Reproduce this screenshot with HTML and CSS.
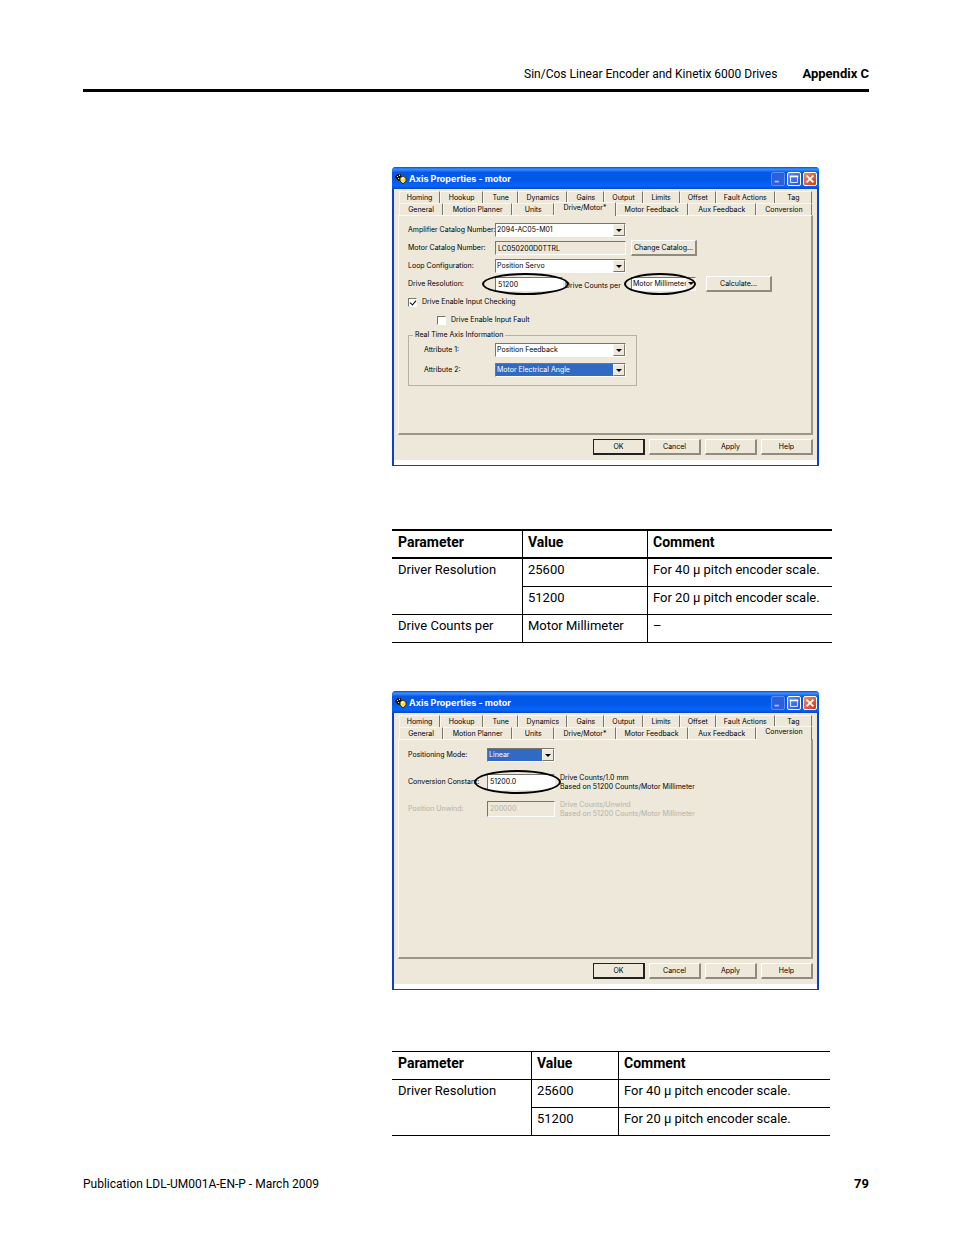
FILE: index.html
```html
<!DOCTYPE html>
<html lang="en">
  <head>
    <meta charset="UTF-8" />
    <meta name="viewport" content="width=device-width, initial-scale=1.0" />
    <title>Sin/Cos Linear Encoder and Kinetix 6000 Drives</title>
    <link rel="stylesheet" href="styles.css">
  </head>

  <body>
    <!-- title bar icon, shared by both dialogs -->
    <svg class="defs" aria-hidden="true">
      <symbol id="axis-icon" viewBox="0 0 12 12">
        <path d="M1 2h1V1h2v1h1V1h1v2h1v3H6v1H5v1H3V7H2V6H1V5H0V3h1z" fill="#111" />
        <path d="M2 3h1v1H2zM4 2h1v1H4zM3 5h1v1H3z" fill="#f5e9a0" />
        <path d="M5 5l3-2 3 2v3l-3 3-3-3z" fill="#f5e04a" stroke="#3a3410" />
        <path d="M6 5l2-1 1 1-2 2z" fill="#fffbd0" />
      </symbol>
    </svg>

    <div class="page">
      <header class="page-header">
        <span>Sin/Cos Linear Encoder and Kinetix 6000 Drives</span>
        <strong>Appendix C</strong>
      </header>

      <main class="content">
        <!-- Drive/Motor tab -->
        <section class="dialog">
          <div class="titlebar">
            <svg class="title-icon"><use href="#axis-icon" /></svg>
            <h2>Axis Properties - motor</h2>
            <button class="win-btn dim" aria-label="Minimize"><svg viewBox="0 0 14 14"><path d="M3 10h5" /></svg></button>
            <button class="win-btn" aria-label="Maximize"><svg viewBox="0 0 14 14"><path d="M2 4h10" /><path class="thin" d="M3 4v7h8V4" /></svg></button>
            <button class="win-btn close" aria-label="Close"><svg viewBox="0 0 14 14"><path d="M3 3l8 8M11 3l-8 8" /></svg></button>
          </div>
          <div class="dialog-body">
            <div class="tabs tabs-back">
              <button>Homing</button>
              <button>Hookup</button>
              <button>Tune</button>
              <button>Dynamics</button>
              <button>Gains</button>
              <button>Output</button>
              <button>Limits</button>
              <button>Offset</button>
              <button>Fault Actions</button>
              <button>Tag</button>
            </div>
            <div class="tabs tabs-front">
              <button>General</button>
              <button>Motion Planner</button>
              <button>Units</button>
              <button class="active">Drive/Motor*</button>
              <button>Motor Feedback</button>
              <button>Aux Feedback</button>
              <button>Conversion</button>
            </div>
            <div class="panel">
              <div class="row">
                <label for="amplifier">Amplifier Catalog Number:</label>
                <div class="combo wide">
                  <select id="amplifier"><option>2094-AC05-M01</option></select>
                  <span class="arrow"></span>
                </div>
              </div>
              <div class="row">
                <label for="motor">Motor Catalog Number:</label>
                <input id="motor" class="field wide readonly" type="text" value="LC050200D0TTRL" readonly />
                <button class="btn">Change Catalog...</button>
              </div>
              <div class="row">
                <label for="loop">Loop Configuration:</label>
                <div class="combo wide">
                  <select id="loop"><option>Position Servo</option></select>
                  <span class="arrow"></span>
                </div>
              </div>
              <div class="row">
                <label for="resolution">Drive Resolution:</label>
                <div class="slot">
                  <div class="circled">
                    <input id="resolution" class="field" type="text" value="51200" />
                  </div>
                  <label class="unit" for="counts">Drive Counts per</label>
                </div>
                <div class="combo circled">
                  <select id="counts"><option>Motor Millimeter</option></select>
                  <span class="arrow"></span>
                </div>
                <button class="btn calculate">Calculate...</button>
              </div>
              <div class="row check">
                <input id="checking" type="checkbox" checked />
                <label for="checking">Drive Enable Input Checking</label>
              </div>
              <div class="row check nested">
                <input id="fault" type="checkbox" />
                <label for="fault">Drive Enable Input Fault</label>
              </div>
              <fieldset>
                <legend>Real Time Axis Information</legend>
                <div class="row">
                  <label for="attr1">Attribute 1:</label>
                  <div class="combo wide">
                    <select id="attr1"><option>Position Feedback</option></select>
                    <span class="arrow"></span>
                  </div>
                </div>
                <div class="row">
                  <label for="attr2">Attribute 2:</label>
                  <div class="combo wide selected">
                    <select id="attr2"><option>Motor Electrical Angle</option></select>
                    <span class="arrow"></span>
                  </div>
                </div>
              </fieldset>
            </div>
            <div class="actions">
              <button class="btn default">OK</button>
              <button class="btn">Cancel</button>
              <button class="btn">Apply</button>
              <button class="btn">Help</button>
            </div>
          </div>
        </section>

        <table class="params drive-params">
          <thead>
            <tr><th>Parameter</th><th>Value</th><th>Comment</th></tr>
          </thead>
          <tbody>
            <tr><td rowspan="2">Driver Resolution</td><td>25600</td><td>For 40 µ pitch encoder scale.</td></tr>
            <tr><td>51200</td><td>For 20 µ pitch encoder scale.</td></tr>
            <tr><td>Drive Counts per</td><td>Motor Millimeter</td><td>–</td></tr>
          </tbody>
        </table>

        <!-- Conversion tab -->
        <section class="dialog">
          <div class="titlebar">
            <svg class="title-icon"><use href="#axis-icon" /></svg>
            <h2>Axis Properties - motor</h2>
            <button class="win-btn dim" aria-label="Minimize"><svg viewBox="0 0 14 14"><path d="M3 10h5" /></svg></button>
            <button class="win-btn" aria-label="Maximize"><svg viewBox="0 0 14 14"><path d="M2 4h10" /><path class="thin" d="M3 4v7h8V4" /></svg></button>
            <button class="win-btn close" aria-label="Close"><svg viewBox="0 0 14 14"><path d="M3 3l8 8M11 3l-8 8" /></svg></button>
          </div>
          <div class="dialog-body">
            <div class="tabs tabs-back">
              <button>Homing</button>
              <button>Hookup</button>
              <button>Tune</button>
              <button>Dynamics</button>
              <button>Gains</button>
              <button>Output</button>
              <button>Limits</button>
              <button>Offset</button>
              <button>Fault Actions</button>
              <button>Tag</button>
            </div>
            <div class="tabs tabs-front">
              <button>General</button>
              <button>Motion Planner</button>
              <button>Units</button>
              <button>Drive/Motor*</button>
              <button>Motor Feedback</button>
              <button>Aux Feedback</button>
              <button class="active">Conversion</button>
            </div>
            <div class="panel conversion">
              <div class="row">
                <label for="mode">Positioning Mode:</label>
                <div class="combo selected">
                  <select id="mode"><option>Linear</option></select>
                  <span class="arrow"></span>
                </div>
              </div>
              <div class="row">
                <label for="constant">Conversion Constant:</label>
                <div class="circled">
                  <input id="constant" class="field" type="text" value="51200.0" />
                </div>
                <p>Drive Counts/1.0 mm<br />Based on 51200 Counts/Motor Millimeter</p>
              </div>
              <div class="row disabled">
                <label for="unwind">Position Unwind:</label>
                <input id="unwind" class="field" type="text" value="200000" disabled />
                <p>Drive Counts/Unwind<br />Based on 51200 Counts/Motor Millimeter</p>
              </div>
            </div>
            <div class="actions">
              <button class="btn default">OK</button>
              <button class="btn">Cancel</button>
              <button class="btn">Apply</button>
              <button class="btn">Help</button>
            </div>
          </div>
        </section>

        <table class="params conversion-params">
          <thead>
            <tr><th>Parameter</th><th>Value</th><th>Comment</th></tr>
          </thead>
          <tbody>
            <tr><td rowspan="2">Driver Resolution</td><td>25600</td><td>For 40 µ pitch encoder scale.</td></tr>
            <tr><td>51200</td><td>For 20 µ pitch encoder scale.</td></tr>
          </tbody>
        </table>
      </main>

      <footer class="page-footer">
        <span>Publication LDL-UM001A-EN-P - March 2009</span>
        <strong>79</strong>
      </footer>
    </div>
  </body>
</html>
```
FILE: styles.css
```css
* {
  box-sizing: border-box;
  margin: 0;
  padding: 0;
}

body {
  background-color: #ffffff;
  color: #000000;
  font-family: Roboto, sans-serif;
  font-size: 13px;
  line-height: 16px;
}

button,
input,
select {
  font: inherit;
  color: inherit;
  border: none;
  border-radius: 0;
  appearance: none;
}

.defs {
  position: absolute;
  width: 0;
  height: 0;
}

.page {
  padding: 66px 85px 40px 83px;
}

.page-header {
  display: flex;
  justify-content: flex-end;
  gap: 25px;
  padding-bottom: 7px;
  border-bottom: 3px solid #000000;
}

.page-header span,
.page-footer span {
  font-size: 12px;
}

.content {
  margin-left: 309px;
  padding-top: 75px;
}

.page-footer {
  display: flex;
  justify-content: space-between;
  margin-top: 40px;
}

/* ---- dialog window ---- */

.dialog {
  max-width: 427px;
  background-color: #ffffff;
  border: 1px solid #0a3fd0;
  border-width: 0 2px 1px;
  border-radius: 4px 4px 0 0;
  padding-bottom: 5px;
  font-family: Inter, sans-serif;
  font-size: 7px;
  line-height: 10px;
}

.titlebar {
  display: flex;
  align-items: center;
  gap: 2px;
  height: 22px;
  margin: 0 -2px;
  padding: 1px 2px 0 3px;
  border-radius: 4px 4px 0 0;
  background: linear-gradient(#0a50d0, #3a90ff 10%, #0458e8 25%, #0458e8 60%, #0566fb 85%, #0447c8);
  color: #ffffff;
}

.title-icon {
  width: 12px;
  height: 12px;
}

.titlebar h2 {
  flex: 1;
  font-size: 9px;
  line-height: 12px;
}

.win-btn {
  width: 14px;
  height: 14px;
  border: 1px solid #ffffff;
  border-radius: 2px;
  background: linear-gradient(135deg, #5b8df5, #1c55dd);
}

.win-btn.dim {
  border-color: #5d8df0;
  background: #2c5fdc;
}

.win-btn.close {
  background: linear-gradient(135deg, #f08a68, #d03a14);
}

.win-btn svg {
  display: block;
  width: 100%;
  height: 100%;
  fill: none;
  stroke: #ffffff;
  stroke-width: 2;
}

.win-btn svg .thin {
  stroke-width: 1;
}

.win-btn.dim svg {
  stroke: #a9c1f5;
}

.dialog-body {
  background-color: #ede8da;
  padding: 2px 4px 5px;
}

/* ---- tabs ---- */

.tabs {
  display: grid;
  padding: 0 1px;
}

.tabs button {
  height: 12px;
  background-color: #ede8da;
  border-top: 1px solid #f9f7f0;
  border-left: 1px solid #f9f7f0;
  border-right: 1px solid #77756c;
  white-space: nowrap;
}

.tabs-back {
  grid-template-columns: 41fr 43fr 35fr 49fr 37fr 38fr 37fr 36fr 59fr 37fr;
}

.tabs-front {
  grid-template-columns: 44fr 69fr 42fr 61fr 72fr 68fr 56fr;
}

.tabs-front button.active {
  height: 14px;
  margin: -1px 0 -1px;
  padding-bottom: 3px;
  z-index: 1;
}

.panel {
  display: flex;
  flex-direction: column;
  gap: 2px;
  height: 220px;
  padding: 6px 9px;
  border: 1px solid #fbfaf5;
  border-right: 2px solid #9a978a;
  border-bottom: 2px solid #9a978a;
}

.actions {
  display: flex;
  justify-content: flex-end;
  gap: 4px;
  padding-top: 4px;
}

.actions .btn {
  width: 52px;
}

/* ---- form controls ---- */

.row {
  display: flex;
  align-items: center;
  gap: 5px;
  height: 16px;
}

.row > label {
  width: 82px;
  white-space: nowrap;
}

.btn {
  width: 66px;
  height: 16px;
  background-color: #ede8da;
  border: 1px solid #ffffff;
  border-right: 2px solid #8f8c7f;
  border-bottom: 2px solid #8f8c7f;
  white-space: nowrap;
}

.btn.default {
  border: 1px solid #222222;
  border-right-width: 2px;
  border-bottom-width: 2px;
}

.btn.calculate {
  margin-left: 5px;
}

.field,
.combo {
  width: 68px;
  height: 14px;
  background-color: #ffffff;
  border: 1px solid #ffffff;
  border-top: 1px solid #77756c;
  border-left: 1px solid #77756c;
}

.field {
  display: block;
  padding-left: 2px;
}

.field.wide,
.combo.wide {
  width: 131px;
}

.field.readonly,
.field:disabled {
  background-color: #ede8da;
}

.combo {
  position: relative;
}

.combo select {
  display: block;
  width: 100%;
  height: 100%;
  padding: 0 0 0 1px;
  background-color: transparent;
}

.combo.selected select {
  background-color: #316ac5;
  color: #ffffff;
}

.arrow {
  position: absolute;
  top: 0;
  right: 0;
  width: 12px;
  height: 12px;
  background-color: #ede8da;
  border: 1px solid #f9f7f0;
  border-right-color: #77756c;
  border-bottom-color: #77756c;
  pointer-events: none;
}

.arrow::before {
  content: "";
  position: absolute;
  top: 4px;
  left: 2px;
  border: 3px solid transparent;
  border-top-color: #000000;
  border-bottom: none;
}

.slot {
  display: flex;
  align-items: center;
  gap: 2px;
  width: 131px;
}

.unit {
  padding-top: 3px;
  white-space: nowrap;
}

/* callout ring round a value */
.circled {
  position: relative;
}

.circled::after {
  content: "";
  position: absolute;
  inset: -4px -6px -4px -13px;
  border: 2px solid #000000;
  border-radius: 50%;
  pointer-events: none;
}

.combo.circled {
  width: 65px;
}

.combo.circled .arrow {
  width: 9px;
  border: none;
}

.combo.circled::after {
  inset: -5px -1px -5px -8px;
}

.check input {
  width: 9px;
  height: 9px;
  background-color: #ffffff;
  border: 1px solid #ffffff;
  border-top-color: #77756c;
  border-left-color: #77756c;
}

.check input:checked::before {
  content: "";
  display: block;
  width: 3px;
  height: 5px;
  margin-left: 2px;
  border: solid #000000;
  border-width: 0 1px 1px 0;
  transform: rotate(40deg);
}

.check > label {
  width: auto;
}

.check.nested {
  padding-left: 29px;
}

fieldset {
  width: 229px;
  padding: 0 0 5px 15px;
  border: 1px solid #b5b2a5;
}

legend {
  margin-left: -11px;
  padding: 0 2px;
}

fieldset .row {
  height: 20px;
}

fieldset .row > label {
  width: 66px;
}

.panel.conversion {
  gap: 11px;
  padding-top: 7px;
}

.conversion .row > label {
  width: 74px;
}

.conversion .field {
  height: 16px;
  padding-bottom: 2px;
}

.conversion p {
  line-height: 9px;
  white-space: nowrap;
}

.disabled {
  color: #b5b2a5;
}

/* ---- parameter tables ---- */

.params {
  table-layout: fixed;
  border-spacing: 0;
  border-top: 1px solid #000000;
}

.params th,
.params td {
  height: 28px;
  padding: 3px 6px 0 5px;
  border-bottom: 1px solid #000000;
  border-left: 1px solid #000000;
  text-align: left;
  vertical-align: top;
  white-space: nowrap;
}

.params th {
  font-size: 14px;
}

.params th:first-child,
.params td[rowspan],
.params tr:last-child td:first-child:nth-last-child(3) {
  padding-left: 6px;
  border-left: none;
}

.drive-params {
  width: 440px;
  margin: 63px 0 48px;
  border-top-width: 2px;
}

.drive-params th {
  border-bottom-width: 2px;
}

.drive-params th:nth-child(1) {
  width: 130px;
}

.drive-params th:nth-child(2) {
  width: 125px;
}

.conversion-params {
  width: 438px;
  margin-top: 61px;
}

.conversion-params th:nth-child(1) {
  width: 139px;
}

.conversion-params th:nth-child(2) {
  width: 87px;
}
```
